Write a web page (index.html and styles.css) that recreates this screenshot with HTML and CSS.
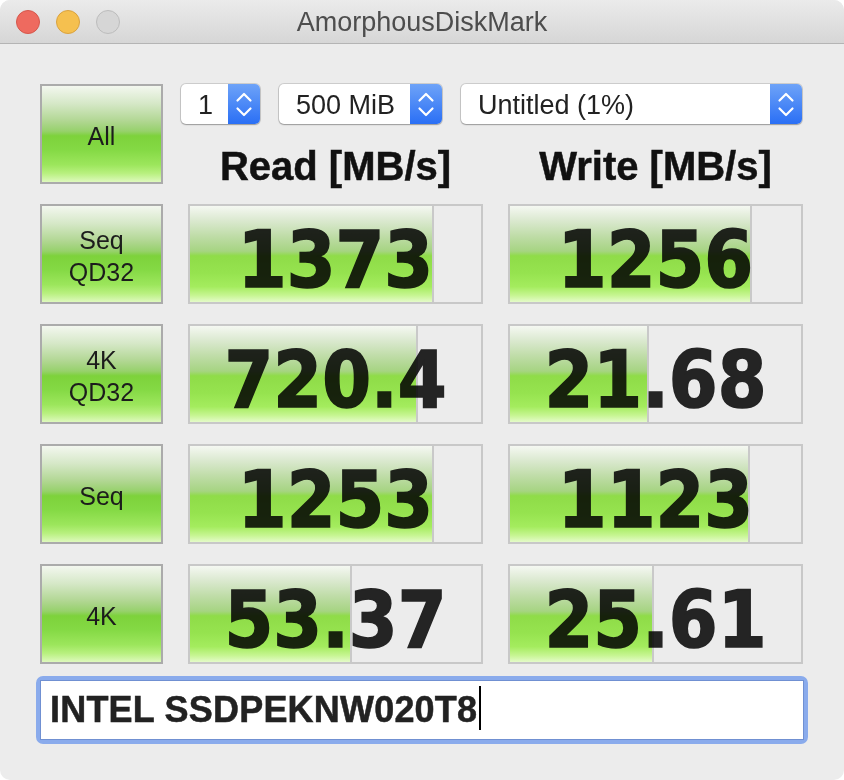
FILE: index.html
```html
<!DOCTYPE html>
<html lang="en">
<head>
  <meta charset="UTF-8" />
  <meta name="viewport" content="width=device-width, initial-scale=1.0"/>
  <title>AmorphousDiskMark</title>
  <link rel="stylesheet" href="styles.css">
</head>

<body>
  <div class="window">
    <header class="titlebar">
      <div class="lights">
        <span class="light close"></span>
        <span class="light minimize"></span>
        <span class="light zoom"></span>
      </div>
      <div class="title">AmorphousDiskMark</div>
      <div></div>
    </header>

    <main class="panel">
      <div class="grid">
        <button class="test-btn">All</button>

        <div class="head">
          <div class="options">
            <div class="select count">
              <span class="select-label">1</span>
              <span class="stepper"><svg width="32" height="40" viewBox="0 0 32 40"><polyline points="9.5,16.5 16,10 22.5,16.5"/><polyline points="9.5,24.5 16,31 22.5,24.5"/></svg></span>
            </div>
            <div class="select size">
              <span class="select-label">500 MiB</span>
              <span class="stepper"><svg width="32" height="40" viewBox="0 0 32 40"><polyline points="9.5,16.5 16,10 22.5,16.5"/><polyline points="9.5,24.5 16,31 22.5,24.5"/></svg></span>
            </div>
            <div class="select volume">
              <span class="select-label">Untitled (1%)</span>
              <span class="stepper"><svg width="32" height="40" viewBox="0 0 32 40"><polyline points="9.5,16.5 16,10 22.5,16.5"/><polyline points="9.5,24.5 16,31 22.5,24.5"/></svg></span>
            </div>
          </div>
          <div class="labels">
            <div>Read [MB/s]</div>
            <div>Write [MB/s]</div>
          </div>
        </div>

        <button class="test-btn">Seq<br>QD32</button>
        <div class="cell"><div class="bar" style="width: 83.2%"></div><span class="value">1373</span></div>
        <div class="cell"><div class="bar" style="width: 82.5%"></div><span class="value">1256</span></div>

        <button class="test-btn">4K<br>QD32</button>
        <div class="cell"><div class="bar" style="width: 77.7%"></div><span class="value">720.4</span></div>
        <div class="cell"><div class="bar" style="width: 47.1%"></div><span class="value">21.68</span></div>

        <button class="test-btn">Seq</button>
        <div class="cell"><div class="bar" style="width: 83.2%"></div><span class="value">1253</span></div>
        <div class="cell"><div class="bar" style="width: 81.8%"></div><span class="value">1123</span></div>

        <button class="test-btn">4K</button>
        <div class="cell"><div class="bar" style="width: 55%"></div><span class="value">53.37</span></div>
        <div class="cell"><div class="bar" style="width: 48.8%"></div><span class="value">25.61</span></div>
      </div>

      <div class="drive">
        <div class="drive-field">INTEL SSDPEKNW020T8<span class="caret"></span></div>
      </div>
    </main>
  </div>
</body>
</html>
```

FILE: styles.css
```css
body {
  margin: 0;
  background: #ffffff;
  font-family: "Liberation Sans", Arial, sans-serif;
}

.window {
  width: 844px;
  height: 780px;
  background: #ececec;
  border-radius: 10px;
  overflow: hidden;
}

/* title bar */
.titlebar {
  height: 43px;
  display: grid;
  grid-template-columns: 1fr auto 1fr;
  align-items: center;
  background: linear-gradient(#ebebeb, #d6d6d6);
  border-bottom: 1px solid #b4b4b4;
}

.lights {
  display: flex;
  gap: 16px;
  padding-left: 16px;
}

.light {
  width: 22px;
  height: 22px;
  border-radius: 50%;
  border: 1px solid;
}

.close { background: #ee6a5f; border-color: #d5574c; }
.minimize { background: #f5c04f; border-color: #d9a23f; }
.zoom { background: #d6d6d6; border-color: #bcbcbc; }

.title {
  font-size: 27px;
  color: #4d4d4d;
  padding-top: 1px;
}

/* benchmark grid */
.panel {
  padding: 40px 0 0 40px;
}

.grid {
  display: grid;
  grid-template-columns: 123px 295px 295px;
  grid-auto-rows: 100px;
  column-gap: 25px;
  row-gap: 20px;
}

.test-btn {
  box-sizing: border-box;
  margin: 0;
  padding: 3px 0 0;
  border: 2px solid #ababab;
  font-family: inherit;
  font-size: 25px;
  line-height: 32px;
  color: #1c1c1c;
  background: linear-gradient(#f3f7ef 0%, #d6e8c8 18%, #b2d794 36%, #97d16c 47%, #7dd23b 52%, #84d944 66%, #9ce65c 82%, #b8f07f 91%, #def9bd 100%);
}

.head {
  grid-column: 2 / 4;
}

.options {
  display: flex;
  gap: 19px;
  margin-left: -7px;
}

.select {
  height: 40px;
  display: flex;
  background: #ffffff;
  border-radius: 5px;
  box-shadow: 0 0 0 1px rgba(0, 0, 0, 0.13), 0 1px 1.5px rgba(0, 0, 0, 0.25);
  overflow: hidden;
}

.count { width: 79px; }
.size { width: 163px; }
.volume { width: 341px; }

.select-label {
  flex: 1;
  padding: 1px 0 0 17px;
  font-size: 27px;
  line-height: 40px;
  color: #222;
}

.stepper {
  width: 32px;
  background: linear-gradient(#6ea3f8, #2a6ff5);
}

.stepper svg {
  display: block;
  fill: none;
  stroke: #ffffff;
  stroke-width: 2.2;
  stroke-linecap: round;
  stroke-linejoin: round;
}

.labels {
  display: grid;
  grid-template-columns: 295px 295px;
  column-gap: 25px;
  margin-top: 22px;
  font-size: 40px;
  font-weight: bold;
  line-height: 1;
  text-align: center;
  color: #111;
  -webkit-text-stroke: 0.5px #111;
}

.cell {
  position: relative;
  box-sizing: border-box;
  border: 2px solid #c8c8c8;
  display: flex;
  align-items: center;
  justify-content: center;
}

.bar {
  position: absolute;
  left: 0;
  top: 0;
  bottom: 0;
  border-right: 2px solid #c9c9c9;
  background: linear-gradient(#f5f8f2 0%, #dbe9d0 15%, #bedca6 32%, #a6d482 47%, #8fdc48 52%, #96e34f 70%, #a4ec5e 84%, #c6f591 93%, #e4fbc9 100%);
}

/* dark digits pick up a green tint where the bar lies under them */
.value {
  position: relative;
  margin-top: 11px;
  font-family: "DejaVu Sans Condensed", "DejaVu Sans", sans-serif;
  font-stretch: condensed;
  font-weight: bold;
  font-size: 78px;
  line-height: 1;
  color: #262626;
  -webkit-text-stroke: 1.6px #262626;
  mix-blend-mode: multiply;
}

/* drive name field */
.drive {
  width: 764px;
  margin: 12px 0 0 -4px;
  border: 4px solid #8aabec;
  border-radius: 7px;
}

.drive-field {
  height: 58px;
  border: 1px solid #7090d2;
  background: #ffffff;
  padding-left: 9px;
  font-size: 36px;
  font-weight: bold;
  line-height: 58px;
  color: #222;
  letter-spacing: 0.2px;
  -webkit-text-stroke: 0.5px #222;
}

.caret {
  display: inline-block;
  width: 2px;
  height: 44px;
  margin-left: 2px;
  vertical-align: -8px;
  background: #000;
}
```
